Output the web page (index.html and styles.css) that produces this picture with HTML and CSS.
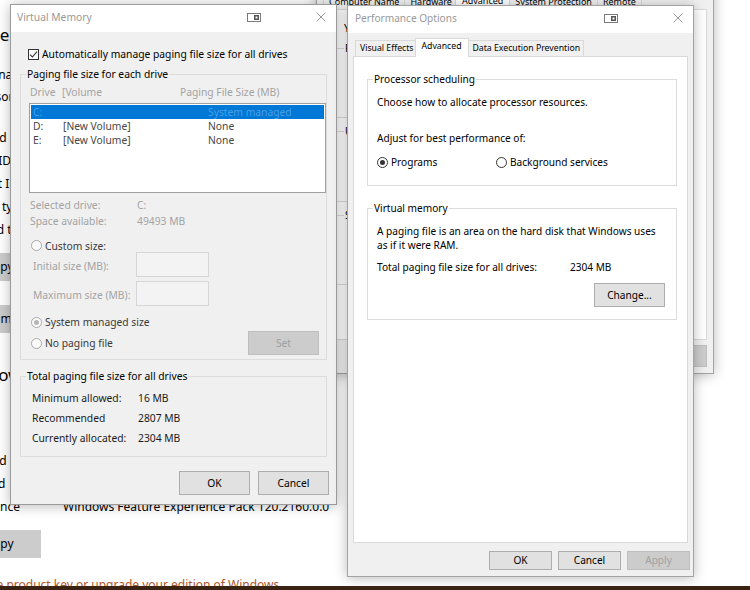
FILE: index.html
```html
<!DOCTYPE html>
<html lang="en">
<head>
<meta charset="utf-8">
<title>Virtual Memory</title>
<link rel="stylesheet" href="styles.css">
</head>
<body>
<div class="desk">

  <section class="settings">
    <h2 class="s-head">Device specifications</h2>
    <div class="s-rows">
      <div class="s-row s-row-short">Device name</div>
      <div class="s-row s-row-tall">Processor</div>
      <div class="s-row">Installed RAM</div>
      <div class="s-row">Device ID</div>
      <div class="s-row">Product ID</div>
      <div class="s-row">System type</div>
      <div class="s-row">Pen and touch</div>
    </div>
    <div class="s-btn">Copy</div>
    <div class="s-btn s-btn-rename">Rename this PC</div>
    <h2 class="s-head s-head2">Windows specifications</h2>
    <div class="s-rows s-rows2">
      <div class="s-row">Edition</div>
      <div class="s-row s-row-blank"></div>
      <div class="s-row">Installed on</div>
      <div class="s-row">OS build</div>
      <div class="s-row"><span class="s-label">Experience</span><span>Windows Feature Experience Pack 120.2160.0.0</span></div>
    </div>
    <div class="s-btn">Copy</div>
    <a class="s-link">Change product key or upgrade your edition of Windows</a>
  </section>

  <section class="win sysprop">
    <div class="sp-title"></div>
    <div class="tabs sp-tabs">
      <span class="tab">Computer Name</span>
      <span class="tab">Hardware</span>
      <span class="tab tab-on">Advanced</span>
      <span class="tab">System Protection</span>
      <span class="tab">Remote</span>
    </div>
    <div class="sp-panel">
      <p class="sp-note">You must be logged on as an Administrator to make most of these changes.</p>
      <fieldset class="sp-group">
        <legend>Performance</legend>
        <div class="sp-gbody">Visual effects, processor scheduling, memory usage, and virtual memory</div>
      </fieldset>
      <fieldset class="sp-group">
        <legend>User Profiles</legend>
        <div class="sp-gbody sp-gbody2">Desktop settings related to your sign-in</div>
      </fieldset>
      <fieldset class="sp-group">
        <legend>Startup and Recovery</legend>
        <div class="sp-gbody">System startup, system failure, and debugging information</div>
      </fieldset>
    </div>
    <div class="sp-btns">
      <button class="btn sp-btn">OK</button>
      <button class="btn sp-btn">Cancel</button>
      <button class="btn sp-btn" disabled>Apply</button>
    </div>
  </section>

  <section class="win vm">
    <header class="titlebar">
      <span class="title">Virtual Memory</span>
      <svg class="t-icon" width="14" height="9" viewBox="0 0 14 9"><rect x="0.5" y="0.5" width="13" height="8" fill="#fff" stroke="#7a7a7a"/><rect x="7" y="2" width="5" height="5" fill="#555"/><rect x="8.5" y="3.5" width="2" height="2" fill="#fff"/></svg>
      <svg class="t-close" width="10" height="10" viewBox="0 0 10 10"><path d="M0.5 0.5L9.5 9.5M9.5 0.5L0.5 9.5" stroke="#9a9a9a" stroke-width="1" fill="none"/></svg>
    </header>
    <div class="vm-body">
      <label class="vm-check"><span class="cb"><svg width="9" height="9" viewBox="0 0 9 9"><path d="M1 4.6L3.4 7L8 1.6" stroke="#333" stroke-width="1.1" fill="none"/></svg></span>Automatically manage paging file size for all drives</label>

      <fieldset class="group vm-g1">
        <legend>Paging file size for each drive</legend>
        <div class="vm-head"><span>Drive</span><span>[Volume</span><span>Paging File Size (MB)</span></div>
        <div class="vm-list">
          <div class="vm-row vm-row-sel"><span>C:</span><span></span><span>System managed</span></div>
          <div class="vm-row"><span>D:</span><span>[New Volume]</span><span>None</span></div>
          <div class="vm-row"><span>E:</span><span>[New Volume]</span><span>None</span></div>
        </div>
        <div class="vm-info">
          <span>Selected drive:</span><span>C:</span>
          <span>Space available:</span><span>49493 MB</span>
        </div>
        <label class="vm-radio vm-custom"><span class="rb rb-dis"></span>Custom size:</label>
        <div class="vm-size"><span class="vm-size-label">Initial size (MB):</span><span class="vm-input"></span></div>
        <div class="vm-size vm-size2"><span class="vm-size-label">Maximum size (MB):</span><span class="vm-input"></span></div>
        <label class="vm-radio vm-sys"><span class="rb rb-dis rb-dis-on"></span>System managed size</label>
        <div class="vm-none">
          <label class="vm-radio"><span class="rb rb-dis"></span>No paging file</label>
          <button class="btn vm-set" disabled>Set</button>
        </div>
      </fieldset>

      <fieldset class="group vm-g2">
        <legend>Total paging file size for all drives</legend>
        <div class="vm-totals">
          <span>Minimum allowed:</span><span>16 MB</span>
          <span>Recommended</span><span>2807 MB</span>
          <span>Currently allocated:</span><span>2304 MB</span>
        </div>
      </fieldset>

      <div class="vm-btns">
        <button class="btn vm-btn">OK</button>
        <button class="btn vm-btn">Cancel</button>
      </div>
    </div>
  </section>

  <section class="win perf">
    <header class="titlebar">
      <span class="title">Performance Options</span>
      <svg class="t-icon" width="14" height="9" viewBox="0 0 14 9"><rect x="0.5" y="0.5" width="13" height="8" fill="#fff" stroke="#7a7a7a"/><rect x="7" y="2" width="5" height="5" fill="#555"/><rect x="8.5" y="3.5" width="2" height="2" fill="#fff"/></svg>
      <svg class="t-close" width="10" height="10" viewBox="0 0 10 10"><path d="M0.5 0.5L9.5 9.5M9.5 0.5L0.5 9.5" stroke="#9a9a9a" stroke-width="1" fill="none"/></svg>
    </header>
    <div class="pf-body">
      <div class="tabs pf-tabs">
        <span class="tab">Visual Effects</span>
        <span class="tab tab-on">Advanced</span>
        <span class="tab">Data Execution Prevention</span>
      </div>
      <div class="pf-panel">
        <fieldset class="group pf-group">
          <legend>Processor scheduling</legend>
          <p class="pf-choose">Choose how to allocate processor resources.</p>
          <p class="pf-adjust">Adjust for best performance of:</p>
          <div class="pf-radios">
            <label class="vm-radio"><span class="rb rb-on"></span>Programs</label>
            <label class="vm-radio"><span class="rb"></span>Background services</label>
          </div>
        </fieldset>
        <fieldset class="group pf-group pf-vmgroup">
          <legend>Virtual memory</legend>
          <p class="pf-desc">A paging file is an area on the hard disk that Windows uses<br>as if it were RAM.</p>
          <div class="pf-total"><span>Total paging file size for all drives:</span><span>2304 MB</span></div>
          <div class="pf-change"><button class="btn pf-change-btn">Change...</button></div>
        </fieldset>
      </div>
      <div class="pf-btns">
        <button class="btn pf-btn">OK</button>
        <button class="btn pf-btn">Cancel</button>
        <button class="btn pf-btn" disabled>Apply</button>
      </div>
    </div>
  </section>

  <div class="taskbar"></div>
</div>
</body>
</html>
```

FILE: styles.css
```css
* { box-sizing: border-box; }
body { margin: 0; }
p { margin: 0; }
button { font: inherit; }

.desk {
  position: relative;
  width: 750px;
  height: 590px;
  overflow: hidden;
  background: #fff;
  font-family: "Noto Sans", "Open Sans", sans-serif;
  color: #000;
}

/* ---------- Settings page (behind) ---------- */
.settings {
  position: absolute;
  left: -42px;
  top: 0;
  width: 420px;
  font-size: 12px;
}
.s-head {
  margin: 23px 0 0 -1px;
  height: 24px;
  line-height: 24px;
  font-size: 17px;
  font-weight: normal;
  white-space: nowrap;
}
.s-head2 { margin-top: 30px; }
.s-rows { margin-top: 17px; }
.s-rows2 { margin-top: 16px; }
.s-row { display: flex; height: 23px; line-height: 23px; white-space: nowrap; }
.s-row-short { height: 22px; line-height: 22px; }
.s-row-tall { height: 40px; line-height: 22px; }
.s-label { width: 105px; flex: none; }
.s-btn {
  margin: 12px 0 0;
  width: 83px;
  height: 28px;
  line-height: 28px;
  background: #cccccc;
  text-align: center;
  white-space: nowrap;
}
.s-btn-rename {
  margin: 24px 0 0;
  width: 130px;
  text-align: left;
  padding-left: 14px;
}
.s-link {
  display: block;
  margin: 17px 0 0 2px;
  line-height: 20px;
  color: #b0562a;
  white-space: nowrap;
}

/* ---------- shared window parts ---------- */
.win {
  position: absolute;
  background: #f0f0f0;
  border: 1px solid #a3a3a3;
  box-shadow: 0 1px 12px rgba(0, 0, 0, 0.28);
}
.titlebar {
  height: 27px;
  background: #fff;
  display: flex;
  align-items: center;
  padding: 0 10px 3px 6px;
}
.title { color: #999; white-space: nowrap; }
.t-icon { margin-left: auto; margin-right: 55px; flex: none; }
.t-close { flex: none; }

.tabs { display: flex; align-items: flex-end; }
.tab {
  height: 16px;
  line-height: 14px;
  padding: 0 3px;
  border: 1px solid #d9d9d9;
  border-bottom: none;
  background: #f0f0f0;
  margin-right: -1px;
  white-space: nowrap;
}
.tab-on {
  position: relative;
  z-index: 1;
  height: 19px;
  line-height: 15px;
  background: #fff;
  margin: 0 -1px -1px -2px;
  padding: 0 5px;
}

.btn {
  background: #e1e1e1;
  border: 1px solid #adadad;
  color: #000;
  padding: 0;
}
.btn:disabled {
  background: #cccccc;
  border-color: #bfbfbf;
  color: #a0a0a0;
}

.group {
  border: 1px solid #dcdcdc;
  margin: 0;
  min-width: 0;
}
.group legend { padding: 0 1px; line-height: 14px; }

/* ---------- System Properties (behind) ---------- */
.sysprop {
  left: 316px;
  top: -30px;
  width: 398px;
  height: 404px;
  padding: 0 6px;
  font-size: 9px;
  line-height: 14px;
}
.sp-title { height: 22px; }
.sp-tabs { height: 16px; }
.sp-tabs .tab { padding: 0 5px; height: 15px; line-height: 13px; }
.sp-tabs .tab-on { height: 17px; line-height: 13px; padding: 0 6px; }
.sp-panel {
  height: 331px;
  background: #fff;
  border: 1px solid #d9d9d9;
  padding: 11px 0 0 20px;
  font-size: 10.3px;
  white-space: nowrap;
  overflow: hidden;
}
.sp-note { width: 340px; overflow: hidden; }
.sp-group {
  margin: 6px 0 0 -10px;
  width: 356px;
  min-width: 0;
  border: 1px solid #dcdcdc;
  padding: 0 0 0 9px;
}
.sp-group legend { padding: 0 1px; line-height: 14px; }
.sp-gbody { height: 62px; padding: 6px 0 0 12px; overflow: hidden; }
.sp-gbody2 { height: 63px; }
.sp-btns {
  margin-top: 5px;
  display: flex;
  justify-content: flex-end;
  gap: 6px;
}
.sp-btn { width: 75px; height: 22px; font-size: 10.3px; }

/* ---------- Virtual Memory dialog ---------- */
.vm {
  left: 10px;
  top: 4px;
  width: 327px;
  height: 501px;
  font-size: 10.3px;
  line-height: 14px;
  border-color: #9b9b9b;
}
.vm-body { padding: 0 9px; }
.vm-check {
  margin-top: 15px;
  padding-left: 8px;
  height: 14px;
  display: flex;
  align-items: center;
  gap: 3px;
  white-space: nowrap;
}
.cb {
  width: 11px;
  height: 11px;
  border: 1px solid #333;
  background: #fff;
  display: flex;
  align-items: center;
  justify-content: center;
  flex: none;
}
.vm-g1 { margin-top: 6px; padding: 0 0 4px 8px; }
.vm-g1 legend, .vm-g2 legend { margin-left: -3px; }
.vm-head {
  margin-top: 4px;
  padding-left: 1px;
  display: grid;
  grid-template-columns: 32px 118px 1fr;
  color: #a3a3a3;
  white-space: nowrap;
}
.vm-list {
  margin-top: 4px;
  height: 90px;
  border: 1px solid #a0a0a0;
  background: #fff;
  padding: 1px;
}
.vm-row {
  height: 14px;
  display: grid;
  grid-template-columns: 30px 145px 1fr;
  padding-left: 2px;
  color: #474747;
  white-space: nowrap;
}
.vm-row-sel { background: #0078d7; color: rgba(255, 255, 255, 0.3); }
.vm-info {
  margin-top: 4px;
  padding-left: 1px;
  display: grid;
  grid-template-columns: 107px auto;
  line-height: 16px;
  color: #a3a3a3;
}
.vm-radio {
  display: flex;
  align-items: center;
  gap: 3px;
  white-space: nowrap;
  color: #3a3a3a;
}
.vm-custom { margin-top: 10px; height: 13px; padding-left: 2px; }
.rb {
  width: 11px;
  height: 11px;
  border-radius: 50%;
  border: 1px solid #333;
  background: #fff;
  flex: none;
  display: flex;
  align-items: center;
  justify-content: center;
}
.rb-on::after, .rb-dis-on::after {
  content: "";
  width: 5px;
  height: 5px;
  border-radius: 50%;
  background: #333;
}
.rb-dis { border-color: #a8a8a8; background: #fbfbfb; }
.rb-dis-on::after { background: #b5b5b5; }
.vm-size {
  height: 25px;
  display: flex;
  align-items: center;
  padding-left: 4px;
  color: #a3a3a3;
  white-space: nowrap;
}
.vm-size2 { margin-top: 4px; }
.vm-size-label { width: 103px; flex: none; padding-top: 2px; }
.vm-input {
  width: 73px;
  height: 25px;
  border: 1px solid #d6d6d6;
  background: #f3f3f3;
}
.vm-sys { margin-top: 9px; height: 14px; padding-left: 2px; }
.vm-none {
  margin-top: 2px;
  height: 24px;
  display: flex;
  align-items: center;
  padding-left: 2px;
}
.vm-set { margin-left: auto; margin-right: 7px; width: 71px; height: 24px; }
.vm-g2 { margin-top: 9px; padding: 0 0 8px 8px; }
.vm-totals {
  margin-top: 5px;
  padding-left: 3px;
  display: grid;
  grid-template-columns: 106px auto;
  line-height: 20px;
  color: #1a1a1a;
}
.vm-btns {
  margin: 14px -2px 0 0;
  display: flex;
  justify-content: flex-end;
  gap: 8px;
}
.vm-btn { width: 71px; height: 24px; }

/* ---------- Performance Options ---------- */
.perf {
  left: 347px;
  top: 5px;
  width: 347px;
  height: 572px;
  font-size: 10.1px;
  line-height: 14px;
  z-index: 2;
}
.perf .titlebar { padding-left: 7px; }
.pf-body { padding: 0 5px; }
.pf-tabs { margin-top: 5px; height: 18px; padding-left: 2px; font-size: 8.7px; }
.pf-tabs .tab { padding: 0 3px 0 4px; }
.pf-tabs .tab-on { padding: 0 6px; }
.pf-panel {
  height: 487px;
  background: #fff;
  border: 1px solid #d9d9d9;
  padding: 0 10px 0 13px;
}
.pf-group { margin-top: 15px; padding: 0 0 16px 9px; }
.pf-group legend { margin-left: -4px; }
.pf-choose { margin-top: 9px; }
.pf-adjust { margin-top: 22px; }
.pf-radios {
  margin-top: 10px;
  display: grid;
  grid-template-columns: 119px auto;
  height: 14px;
}
.pf-radios .vm-radio { color: #000; }
.pf-vmgroup { padding-bottom: 12px; }
.pf-desc { margin-top: 9px; white-space: nowrap; }
.pf-total { margin-top: 8px; display: grid; grid-template-columns: 193px auto; white-space: nowrap; }
.pf-change { margin-top: 9px; display: flex; justify-content: flex-end; padding-right: 11px; }
.pf-change-btn { width: 71px; height: 24px; }
.pf-btns {
  margin: 8px -2px 0 0;
  display: flex;
  justify-content: flex-end;
  gap: 6px;
}
.pf-btn { width: 63px; height: 19px; line-height: 15px; }

/* ---------- taskbar ---------- */
.taskbar {
  position: absolute;
  left: 0;
  right: 0;
  bottom: 0;
  height: 4px;
  background: #3b2313;
  z-index: 3;
}
```
